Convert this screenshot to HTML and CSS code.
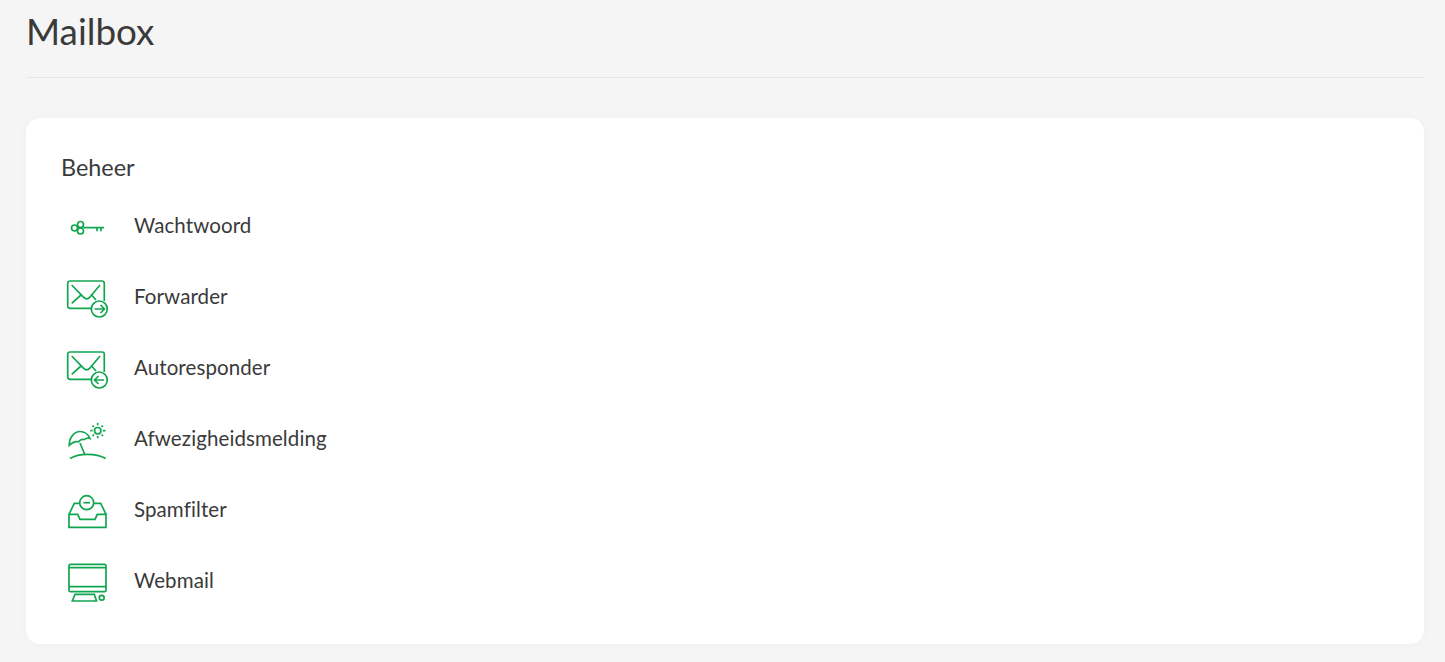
FILE: index.html
```html
<!DOCTYPE html>
<html lang="nl">
<head>
<meta charset="utf-8">
<title>Mailbox</title>
<link rel="stylesheet" href="styles.css">
</head>
<body>
<main class="page">
  <header class="page-header"><h1 class="title">Mailbox</h1></header>
  <section class="card">
    <h2 class="card-title">Beheer</h2>
    <ul class="menu">
      <li class="item">
        <svg class="icon" viewBox="0 0 44 44"><circle cx="9.5" cy="25" r="3"/><circle cx="15.5" cy="21.5" r="3"/><circle cx="15.5" cy="28" r="3"/><path d="M18.500 24.700H39M36 24.700v3.500M32 24.700v3.500"/></svg>
        <span class="label">Wachtwoord</span>
      </li>
      <li class="item">
        <svg class="icon" viewBox="0 0 44 44"><path d="M26 34.300H5a2.300 2.300 0 0 1-2.300-2.300V9.300A2.300 2.300 0 0 1 5 7h32a2.300 2.300 0 0 1 2.300 2.300V27"/><path d="M6.700 11l11.500 11.800q2 2 3.500 2t3.500-2L35 11M6.700 29.300L16 21M26 20.300L31 26"/><circle cx="34.300" cy="35" r="8"/><path d="M29.500 35H39M35.500 31l4 4-4 4"/></svg>
        <span class="label">Forwarder</span>
      </li>
      <li class="item">
        <svg class="icon" viewBox="0 0 44 44"><path d="M26 34.300H5a2.300 2.300 0 0 1-2.300-2.300V9.300A2.300 2.300 0 0 1 5 7h32a2.300 2.300 0 0 1 2.300 2.300V27"/><path d="M6.700 11l11.500 11.800q2 2 3.500 2t3.500-2L35 11M6.700 29.300L16 21M26 20.300L31 26"/><circle cx="34.300" cy="35" r="8"/><path d="M39 35H29.500M33.500 31l-4 4 4 4"/></svg>
        <span class="label">Autoresponder</span>
      </li>
      <li class="item">
        <svg class="icon" viewBox="0 0 44 44"><circle cx="32.700" cy="14.700" r="3.200"/><path d="M32.700 7v2.300M32.700 20v2.300M25.300 14.700h2.300M37.800 14.700h2.700M27.500 9.500l1.500 1.500M36.500 18.500l1.500 1.500M27.500 20l1.500-1.500M36.500 11l1.500-1.500"/><path d="M4.300 29.500C4 22 9 15.500 15 15.500c4.500 0 8 2.500 10 7-2-.8-4-.6-5.500 1-2.500-.6-4.500.2-6 2.300-3-.5-6.500.8-9.200 3.700z"/><path d="M15 27l5 12"/><path d="M5 42.500C14 37 31 37 40.700 42.500"/></svg>
        <span class="label">Afwezigheidsmelding</span>
      </li>
      <li class="item">
        <svg class="icon" viewBox="0 0 44 44"><circle cx="21.700" cy="15.700" r="7"/><path d="M18.500 15.700h6.500"/><path d="M15 16.300H9.300L4 27.300M28.700 16.300h7L41 27.300"/><path d="M4 27.300h8.700l2.300 5h15l2.300-5H41v13H4z"/></svg>
        <span class="label">Spamfilter</span>
      </li>
      <li class="item">
        <svg class="icon" viewBox="0 0 44 44"><rect x="4" y="6.300" width="37" height="27.400" rx="1.500"/><path d="M4 9.700h37M4 28.700h37"/><path d="M10 36.300h19.300L31.500 43H7.300z"/><circle cx="36.700" cy="39.700" r="2.400"/></svg>
        <span class="label">Webmail</span>
      </li>
    </ul>
  </section>
</main>
</body>
</html>
```
FILE: styles.css
```css
* { box-sizing: border-box; }
html, body { margin: 0; padding: 0; }
body {
  background: #f5f5f5;
  color: #3a3a3a;
  font-family: "Lato", "Open Sans", sans-serif;
  font-variant-ligatures: none;
  height: 662px;
  overflow: hidden;
}
.page { padding: 0 21px 0 26px; }
.page-header {
  height: 78px;
  border-bottom: 1px solid #e6e6e6;
  margin-bottom: 40px;
}
.title {
  margin: 0;
  padding-top: 9px;
  font-size: 36.800px;
  line-height: 44px;
  font-weight: 400;
}
.card {
  background: #fff;
  border-radius: 14px;
  height: 526px;
  padding: 35px 35px 0;
  box-shadow: 0 0 8px rgba(0, 0, 0, 0.03);
}
.card-title {
  margin: 0 0 8px;
  font-size: 23.400px;
  line-height: 28px;
  font-weight: 400;
}
.menu { list-style: none; margin: 0; padding: 0; }
.item {
  display: flex;
  align-items: center;
  height: 71px;
}
.icon {
  width: 44px;
  height: 44px;
  margin-left: 4px;
  margin-right: 25px;
  fill: none;
  stroke: #12a550;
  stroke-width: 1.7;
  flex: none;
}
.label { font-size: 20.500px; line-height: 28px; letter-spacing: 0.1px; }
```
